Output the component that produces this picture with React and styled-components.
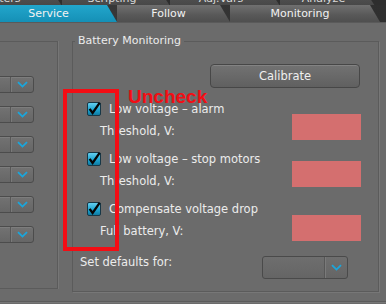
import React from "react";
import styled, { createGlobalStyle } from "styled-components";

const GlobalStyle = createGlobalStyle`
  html, body {
    margin: 0;
    padding: 0;
    background: #6b6b6b;
  }
  * {
    box-sizing: border-box;
  }
`;

const backTabs = [
  { title: "Filters", width: 108, shift: -46 },
  { title: "Scripting", width: 108 },
  { title: "Adj.Vars", width: 110 },
  { title: "Analyze", width: 95 },
];

const frontTabs = [
  { title: "Service", width: 127, active: true },
  { title: "Follow", width: 113 },
  { title: "Monitoring", width: 150 },
];

const settings = [
  { label: "Low voltage – alarm", value: "Threshold, V:" },
  { label: "Low voltage – stop motors", value: "Threshold, V:" },
  { label: "Compensate voltage drop", value: "Full battery, V:" },
];

const Chevron = () => (
  <svg width="11" height="7" viewBox="0 0 11 7">
    <path d="M1 1.2 L5.5 5.6 L10 1.2" fill="none" stroke="#1aa6dc" strokeWidth="1.8" />
  </svg>
);

const Check = () => (
  <svg width="14" height="14" viewBox="0 0 14 14">
    <path d="M2.6 6.8 L5.6 11 L12.6 0.8" fill="none" stroke="#050505" strokeWidth="2.3" />
  </svg>
);

const App = () => {
  return (
    <>
      <GlobalStyle />
      <Screen>
        <BackRow>
          {backTabs.map((tab) => (
            <BackTab key={tab.title} $width={tab.width} $shift={tab.shift || 0}>
              {tab.title}
            </BackTab>
          ))}
        </BackRow>
        <FrontRow>
          {frontTabs.map((tab) => (
            <FrontTab key={tab.title} $width={tab.width} $active={tab.active} $first={tab.active}>
              {tab.title}
            </FrontTab>
          ))}
        </FrontRow>

        <Body>
          <SidePanel>
            {[0, 1, 2, 3, 4, 5].map((i) => (
              <SideSelect key={i}>
                <SelectField />
                <SelectArrow>
                  <Chevron />
                </SelectArrow>
              </SideSelect>
            ))}
          </SidePanel>

          <GroupBox>
            <Legend>Battery Monitoring</Legend>
            <GroupContent>
              <CalibrateButton>Calibrate</CalibrateButton>
              {settings.map((item, i) => (
                <SettingBlock key={item.label} $first={i === 0}>
                  <SettingText>
                    <CheckRow>
                      <CheckBox>
                        <Check />
                      </CheckBox>
                      <CheckLabel>{item.label}</CheckLabel>
                    </CheckRow>
                    <ValueLabel>{item.value}</ValueLabel>
                  </SettingText>
                  <ValueField $offset={[12, 9, 13][i]} />
                </SettingBlock>
              ))}
              <DefaultsRow>
                <DefaultsLabel>Set defaults for:</DefaultsLabel>
                <DefaultsSelect>
                  <SelectField />
                  <SelectArrow>
                    <Chevron />
                  </SelectArrow>
                </DefaultsSelect>
              </DefaultsRow>
            </GroupContent>
          </GroupBox>
        </Body>
        <BottomLine />

        <Marker />
        <MarkerText>Uncheck</MarkerText>
      </Screen>
    </>
  );
};

export default App;

const Screen = styled.div`
  position: relative;
  width: 386px;
  height: 304px;
  overflow: hidden;
  background: #6b6b6b;
  font-family: "DejaVu Sans", "Liberation Sans", sans-serif;
  color: #ececec;
`;

const BackRow = styled.div`
  display: flex;
  height: 5px;
  overflow: hidden;
  background: #2e2e2e;
`;

const BackTab = styled.div`
  flex: none;
  width: ${(p) => p.$width}px;
  margin-left: ${(p) => p.$shift}px;
  height: 14px;
  margin-top: -8px;
  padding-right: 8px;
  display: flex;
  align-items: center;
  justify-content: center;
  font-size: 11px;
  line-height: 14px;
  color: #d8d8d8;
  background: linear-gradient(#555, #474747);
  clip-path: polygon(0 0, calc(100% - 9px) 0, 100% 100%, 0 100%);
`;

const FrontRow = styled.div`
  display: flex;
  height: 18px;
  background: linear-gradient(90deg, #3a3a3a, #2f2f2f);
  border-bottom: 1px solid #5a5a5a;
`;

const FrontTab = styled.div`
  flex: none;
  width: ${(p) => p.$width}px;
  margin-left: ${(p) => (p.$first ? -10 : 0)}px;
  padding-right: 10px;
  display: flex;
  align-items: center;
  justify-content: center;
  font-size: 11px;
  color: #f2f2f2;
  background: ${(p) =>
    p.$active
      ? "linear-gradient(#22a6cc, #1590b6)"
      : "linear-gradient(#707070, #585858 60%, #4f4f4f)"};
  clip-path: polygon(0 0, calc(100% - 10px) 0, 100% 100%, 0 100%);
`;

const Body = styled.div`
  display: flex;
  align-items: flex-start;
`;

const SidePanel = styled.div`
  flex: none;
  width: 58px;
  height: 248px;
  margin-top: 18px;
  border-top: 1px solid #5b5b5b;
  border-right: 1px solid #5b5b5b;
  border-bottom: 1px solid #5b5b5b;
  box-shadow: 1px 0 0 #767676;
  padding-top: 34px;
  display: flex;
  flex-direction: column;
  gap: 13px;
`;

const SideSelect = styled.div`
  display: flex;
  width: 61px;
  height: 17px;
  margin-left: -27px;
  border: 1px solid #4c4c4c;
  border-radius: 3px;
  background: linear-gradient(#727272, #666);
  box-shadow: inset 0 1px 0 rgba(255, 255, 255, 0.08);
`;

const SelectField = styled.div`
  flex: 1;
  border-right: 1px solid #575757;
`;

const SelectArrow = styled.div`
  flex: none;
  width: 22px;
  display: flex;
  align-items: center;
  justify-content: center;
  border-left: 1px solid #7a7a7a;
`;

const GroupBox = styled.fieldset`
  flex: none;
  width: 307px;
  margin: 11px 0 0 14px;
  padding: 0 2px;
  border: 1px solid #5b5b5b;
  box-shadow: 1px 1px 0 #777;
  min-width: 0;
`;

const Legend = styled.legend`
  padding: 0 3px;
  font-size: 11px;
  line-height: 14px;
  color: #ececec;
`;

const GroupContent = styled.div`
  display: flex;
  flex-direction: column;
  padding: 16px 15px 12px 5px;
`;

const CalibrateButton = styled.div`
  align-self: flex-end;
  width: 150px;
  height: 24px;
  display: flex;
  align-items: center;
  justify-content: center;
  font-size: 11.5px;
  color: #efefef;
  border: 1px solid #474747;
  border-radius: 4px;
  background: linear-gradient(#727272, #606060);
  box-shadow: inset 0 1px 0 rgba(255, 255, 255, 0.12);
  margin-right: 1px;
`;

const SettingBlock = styled.div`
  display: flex;
  justify-content: space-between;
  height: 50px;
  margin-top: ${(p) => (p.$first ? 14 : 0)}px;
`;

const SettingText = styled.div`
  display: flex;
  flex-direction: column;
`;

const CheckRow = styled.div`
  display: flex;
  align-items: center;
  height: 14px;
  margin-left: 7px;
  gap: 8px;
`;

const CheckBox = styled.div`
  width: 14px;
  height: 14px;
  border: 1px solid #173746;
  border-radius: 2px;
  background: linear-gradient(#63cdee, #1ea6d2 55%, #0d7aa2);
  position: relative;
  & > svg {
    position: absolute;
    left: -1px;
    top: -1px;
  }
`;

const CheckLabel = styled.span`
  font-size: 11.5px;
  white-space: nowrap;
`;

const ValueLabel = styled.div`
  margin: 7px 0 0 20px;
  height: 16px;
  line-height: 16px;
  font-size: 11.5px;
`;

const ValueField = styled.div`
  width: 69px;
  height: 26px;
  margin-top: ${(p) => p.$offset}px;
  background: #d46f6f;
`;

const DefaultsRow = styled.div`
  display: flex;
  justify-content: space-between;
  align-items: flex-start;
  margin-top: 4px;
`;

const DefaultsLabel = styled.div`
  font-size: 11.5px;
  line-height: 14px;
  margin-top: -1px;
`;

const DefaultsSelect = styled.div`
  display: flex;
  width: 86px;
  height: 23px;
  margin-right: 13px;
  border: 1px solid #4a4a4a;
  border-radius: 3px;
  background: linear-gradient(#6e6e6e, #656565);
`;

const BottomLine = styled.div`
  margin-top: 9px;
  border-top: 1px solid #5b5b5b;
  box-shadow: 0 1px 0 #777;
`;

const Marker = styled.div`
  position: absolute;
  left: 63px;
  top: 89px;
  width: 56px;
  height: 162px;
  border: 4px solid #f30d14;
`;

const MarkerText = styled.div`
  position: absolute;
  left: 128px;
  top: 86px;
  font-family: "Liberation Sans", Arial, sans-serif;
  font-weight: bold;
  font-size: 19px;
  color: #f30d14;
`;
